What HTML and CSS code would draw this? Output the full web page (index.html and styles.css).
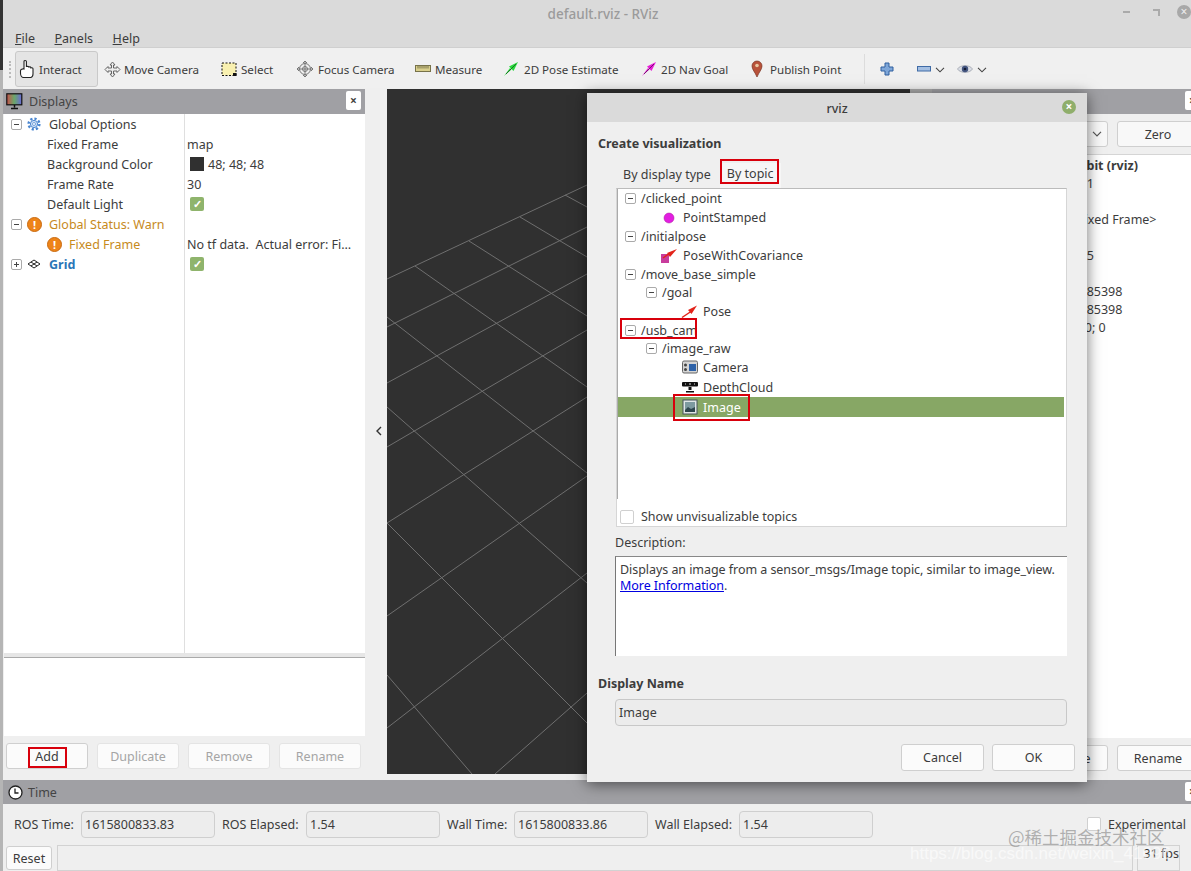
FILE: index.html
```html
<!DOCTYPE html>
<html lang="en">
<head>
    <meta charset="UTF-8">
    <title>default.rviz - RViz</title>
    <link rel="stylesheet" href="styles.css">
</head>
<body>
<div class="desk-strip"></div>
<div class="window">
    <!-- title + menu -->
    <header class="titlebar">
        <div class="title-row">
            <span class="win-title">default.rviz - RViz</span>
            <div class="win-controls">
                <span class="win-min"></span>
                <span class="win-max"></span>
                <span class="win-close">×</span>
            </div>
        </div>
        <nav class="menu">
            <span><u>F</u>ile</span>
            <span><u>P</u>anels</span>
            <span><u>H</u>elp</span>
        </nav>
    </header>

    <!-- toolbar -->
    <div class="toolbar">
        <span class="grip"></span>
        <div class="tool tool-interact active">
            <svg width="18" height="20" viewBox="0 0 18 20"><path d="M5 10V2.6c0-1.5 2.4-1.5 2.4 0V8c0-1 2.2-1 2.2 0v.6c0-1 2.2-1 2.2 0v.8c0-1 2.2-.9 2.2.3v5.400c0 1.500-.8 3-2.200 3.400H4.500C2.800 18.500 1.500 16.400 1.500 14v-2.200C1.500 10.400 3.500 9.600 5 10z" fill="#fff" stroke="#222" stroke-width="1.100"/></svg>
            <span>Interact</span>
        </div>
        <div class="tool tool-move">
            <svg width="17" height="17" viewBox="0 0 17 17"><path d="M8.500 1l2.500 3H9.500v3H13V5.500l3 3-3 3V10H9.500v3H11l-2.500 3-2.500-3h1.500v-3H4v1.500l-3-3 3-3V7h3.500V4H6z" fill="#eee" stroke="#666" stroke-width="1"/></svg>
            <span>Move Camera</span>
        </div>
        <div class="tool tool-select">
            <svg width="16" height="15" viewBox="0 0 16 15"><rect x="1" y="1" width="14" height="12.500" fill="#f8f0b0" stroke="#111" stroke-dasharray="2 1.500"/><rect x="12" y="11" width="3.500" height="3" fill="#111"/></svg>
            <span>Select</span>
        </div>
        <div class="tool tool-focus">
            <svg width="18" height="18" viewBox="0 0 18 18" fill="none" stroke="#777"><circle cx="9" cy="9" r="5.500" fill="#eee"/><circle cx="9" cy="9" r="2.500"/><path d="M9 1v16M1 9h16"/><path d="M7 3l2-2 2 2M7 15l2 2 2-2M3 7L1 9l2 2M15 7l2 2-2 2"/></svg>
            <span>Focus Camera</span>
        </div>
        <div class="tool tool-measure">
            <svg width="16" height="10" viewBox="0 0 16 10"><rect x=".5" y="1.500" width="15" height="6" fill="#d9cf8c" stroke="#77724a"/><path d="M3 2v2.500M5 2v2.500M7 2v2.500M9 2v2.500M11 2v2.500M13 2v2.500" stroke="#77724a"/></svg>
            <span>Measure</span>
        </div>
        <div class="tool tool-pose">
            <svg width="16" height="16" viewBox="0 0 16 16"><path d="M1 15l6-8 1.500 1.500z" fill="#28d83c"/><path d="M15 1L6 5.500 10.500 10z" fill="#28d83c"/><path d="M3 13L13 3" stroke="#145c1c" stroke-width=".8"/></svg>
            <span>2D Pose Estimate</span>
        </div>
        <div class="tool tool-nav">
            <svg width="16" height="16" viewBox="0 0 16 16"><path d="M1 15l6-8 1.500 1.500z" fill="#e81cd8"/><path d="M15 1L6 5.500 10.500 10z" fill="#e81cd8"/><path d="M3 13L13 3" stroke="#5c1458" stroke-width=".8"/></svg>
            <span>2D Nav Goal</span>
        </div>
        <div class="tool tool-publish">
            <svg width="12" height="18" viewBox="0 0 12 18"><path d="M6 17C4 12 1 9.500 1 6a5 5 0 0 1 10 0c0 3.500-3 6-5 11z" fill="#b8523a" stroke="#7a3324" stroke-width=".7"/><circle cx="6" cy="5.500" r="1.800" fill="#e8c8a0"/></svg>
            <span>Publish Point</span>
        </div>
        <span class="tool-sep"></span>
        <div class="tool-icons">
            <svg class="ic-plus" width="14" height="14" viewBox="0 0 14 14"><path d="M5 1h4v4h4v4H9v4H5V9H1V5h4z" fill="#7ea6d8" stroke="#2f5f9e"/></svg>
            <svg class="ic-minus" width="14" height="6" viewBox="0 0 14 6"><rect x=".5" y=".5" width="13" height="4.500" fill="#a4bfe2" stroke="#3f6ba6"/></svg>
            <svg class="ic-chev" width="10" height="6" viewBox="0 0 10 6" fill="none" stroke="#444" stroke-width="1.100"><path d="M1 .8l4 4 4-4"/></svg>
            <svg class="ic-eye" width="16" height="12" viewBox="0 0 16 12"><path d="M.5 6C3 1.500 13 1.500 15.500 6 13 10.500 3 10.500.5 6z" fill="#d8dce4" stroke="#8a8f9a" stroke-width=".6"/><circle cx="8" cy="6" r="3.200" fill="#44557f"/><circle cx="8" cy="6" r="1.300" fill="#111a33"/></svg>
            <svg class="ic-chev" width="10" height="6" viewBox="0 0 10 6" fill="none" stroke="#444" stroke-width="1.100"><path d="M1 .8l4 4 4-4"/></svg>
        </div>
    </div>

    <!-- main dock area -->
    <div class="main">
        <section class="panel-left">
            <div class="dock-header">
                <svg width="17" height="17" viewBox="0 0 17 17"><defs><linearGradient id="mon" x1="0" x2="1"><stop offset="0" stop-color="#c8504a"/><stop offset=".5" stop-color="#6aa86a"/><stop offset="1" stop-color="#6a6ad8"/></linearGradient></defs><rect x=".8" y=".8" width="15" height="11" fill="url(#mon)" stroke="#111" stroke-width="1.200"/><path d="M8.500 12v2.500M5 15.500h7" stroke="#111" stroke-width="1.500"/></svg>
                <span>Displays</span>
                <span class="dock-close">×</span>
            </div>
            <div class="tree">
                <div class="tree-row">
                    <div class="tree-name"><span class="exp minus"></span>
                        <svg class="row-icon" width="14" height="14" viewBox="0 0 14 14" fill="none"><circle cx="7" cy="7" r="5.400" stroke="#4a86d0" stroke-width="2.400" stroke-dasharray="2.200 2"/><circle cx="7" cy="7" r="3.600" fill="#cfe0f6" stroke="#4a86d0"/><circle cx="7" cy="7" r="1.500" fill="#fff" stroke="#4a86d0" stroke-width=".7"/></svg>
                        <span>Global Options</span></div>
                    <div class="tree-val"></div>
                </div>
                <div class="tree-row">
                    <div class="tree-name prop">Fixed Frame</div>
                    <div class="tree-val">map</div>
                </div>
                <div class="tree-row">
                    <div class="tree-name prop">Background Color</div>
                    <div class="tree-val"><span class="swatch"></span>48; 48; 48</div>
                </div>
                <div class="tree-row">
                    <div class="tree-name prop">Frame Rate</div>
                    <div class="tree-val">30</div>
                </div>
                <div class="tree-row">
                    <div class="tree-name prop">Default Light</div>
                    <div class="tree-val"><span class="check">✓</span></div>
                </div>
                <div class="tree-row warn">
                    <div class="tree-name"><span class="exp minus"></span><span class="warn-ic">!</span><span>Global Status: Warn</span></div>
                    <div class="tree-val"></div>
                </div>
                <div class="tree-row warn">
                    <div class="tree-name sub"><span class="warn-ic">!</span><span>Fixed Frame</span></div>
                    <div class="tree-val dark">No tf data.&nbsp; Actual error: Fi…</div>
                </div>
                <div class="tree-row">
                    <div class="tree-name grid-name"><span class="exp plus"></span>
                        <svg class="row-icon" width="14" height="10" viewBox="0 0 14 10" fill="none" stroke="#222"><path d="M7 1l6 4-6 4-6-4z"/><path d="M4 3l6 4M10 3L4 7"/></svg>
                        <span>Grid</span></div>
                    <div class="tree-val"><span class="check">✓</span></div>
                </div>
            </div>
            <div class="splitter"></div>
            <div class="help-box"></div>
            <div class="btn-row">
                <button class="btn">Add</button>
                <button class="btn off">Duplicate</button>
                <button class="btn off">Remove</button>
                <button class="btn off">Rename</button>
            </div>
        </section>

        <div class="collapse-strip">
            <svg width="8" height="10" viewBox="0 0 8 10" fill="none" stroke="#333" stroke-width="1.400"><path d="M6 1L2 5l4 4"/></svg>
        </div>

        <div class="viewport">
            <svg width="523" height="685" viewBox="387 89 523 685" stroke="#6f6f6f" stroke-width="1" fill="none">
                <path d="M387 279L587 185M387 327L587 227M387 383L587 274M387 447L587 330M387 523L587 397M387 616L587 476M387 728L587 573M495 774L587 693"/>
                <path d="M565 195L587 207M520 217L587 257M469 241L587 316M415 266L587 387M387 317L587 473M387 407L587 583M387 523L587 723M387 675L472 774"/>
            </svg>
        </div>

        <div class="gap-strip"></div>

        <section class="panel-right">
            <div class="dock-header">
                <span>Views</span>
                <span class="dock-close clipped">×</span>
            </div>
            <div class="views-top">
                <span class="combo"><svg width="10" height="6" viewBox="0 0 10 6" fill="none" stroke="#555" stroke-width="1.200"><path d="M1 .8l4 4 4-4"/></svg></span>
                <button class="btn zero">Zero</button>
            </div>
            <div class="views-list">
                <div class="view-row bold"><span>Current View</span><span>Orbit (rviz)</span></div>
                <div class="view-row num"><span>Near Clip</span><span>0.01</span></div>
                <div class="view-row"><span>Invert Z</span><span></span></div>
                <div class="view-row"><span>Target</span><span>&lt;Fixed Frame&gt;</span></div>
                <div class="view-row num"><span>Distance</span><span>10</span></div>
                <div class="view-row num"><span>Shape</span><span>0.05</span></div>
                <div class="view-row"><span>Fixed</span><span></span></div>
                <div class="view-row num"><span>Yaw</span><span>0.785398</span></div>
                <div class="view-row num"><span>Pitch</span><span>0.785398</span></div>
                <div class="view-row"><span>Focal</span><span>0; 0; 0</span></div>
            </div>
            <div class="btn-row right-btns">
                <button class="btn">Remove</button>
                <button class="btn">Rename</button>
            </div>
        </section>
    </div>

    <!-- time panel -->
    <section class="time-panel">
        <div class="dock-header time-head">
            <svg width="15" height="15" viewBox="0 0 15 15"><circle cx="7.500" cy="7.500" r="6.500" fill="#fff" stroke="#222" stroke-width="1.300"/><path d="M7 3.500V8h3.500" fill="none" stroke="#222" stroke-width="1.300"/></svg>
            <span>Time</span>
            <span class="dock-close clipped">×</span>
        </div>
        <div class="time-row">
            <label class="lbl-short">ROS Time:</label><span class="field">1615800833.83</span>
            <label class="lbl-long">ROS Elapsed:</label><span class="field">1.54</span>
            <label class="lbl-short">Wall Time:</label><span class="field">1615800833.86</span>
            <label class="lbl-long">Wall Elapsed:</label><span class="field">1.54</span>
            <span class="experimental"><span class="box"></span>Experimental</span>
        </div>
    </section>

    <footer class="statusbar">
        <button class="btn reset">Reset</button>
        <span class="status-field"></span>
        <span class="fps">31 fps</span>
    </footer>
</div>

<!-- Create visualization dialog -->
<div class="dialog">
    <div class="dlg-title">
        <span>rviz</span>
        <span class="dlg-close">×</span>
    </div>
    <div class="dlg-body">
        <h4 class="dlg-heading">Create visualization</h4>
        <div class="tabs">
            <span class="tab">By display type</span>
            <span class="tab current">By topic</span>
        </div>
        <div class="topic-box">
            <div class="topic-tree">
                <div class="t-row"><span class="exp minus"></span>/clicked_point</div>
                <div class="t-row leaf"><svg class="t-icon" width="16" height="16" viewBox="0 0 16 16"><circle cx="5" cy="8" r="5" fill="#e21ee0" stroke="#a8149c" stroke-width=".5"/></svg>PointStamped</div>
                <div class="t-row"><span class="exp minus"></span>/initialpose</div>
                <div class="t-row leaf"><svg class="t-icon" width="16" height="16" viewBox="0 0 16 16"><rect x="-3" y="6" width="8" height="9" fill="#c83c9c"/><path d="M-1 10L6 5" stroke="#e2231a" stroke-width="1.500"/><path d="M13 1L3 5 6 9z" fill="#e2231a"/></svg>PoseWithCovariance</div>
                <div class="t-row short"><span class="exp minus"></span>/move_base_simple</div>
                <div class="t-row lvl2 short"><span class="exp minus"></span>/goal</div>
                <div class="t-row leaf2 tall"><svg class="t-icon" width="16" height="16" viewBox="0 0 16 16"><path d="M0 14.500L9 8.500" stroke="#e2231a" stroke-width="1.500"/><path d="M15 2.500L6 7 9.500 11z" fill="#e2231a"/></svg>Pose</div>
                <div class="t-row"><span class="exp minus"></span>/usb_cam</div>
                <div class="t-row lvl2 xshort"><span class="exp minus"></span>/image_raw</div>
                <div class="t-row leaf2 tall"><svg class="t-icon" width="16" height="16" viewBox="0 0 16 16"><rect x=".5" y="2" width="15" height="12" rx="1.500" fill="#d4d4d4" stroke="#666"/><rect x="7" y="5" width="7" height="7" fill="#2e62a8"/><circle cx="3.500" cy="6" r="1.500" fill="#444"/><circle cx="3.500" cy="10.500" r="1.500" fill="#444"/></svg>Camera</div>
                <div class="t-row leaf2 tall"><svg class="t-icon" width="16" height="16" viewBox="0 0 16 16"><rect x="0" y="3" width="16" height="4.500" rx="1" fill="#111"/><path d="M3 5h1M7 5h2M12 5h1" stroke="#ddd"/><path d="M6.500 8h3v3h-3zM4 12h8v1.500H4z" fill="#111"/></svg>DepthCloud</div>
                <div class="t-row leaf2 tall selected"><svg class="t-icon" width="16" height="16" viewBox="0 0 16 16"><rect x="1" y="1" width="14" height="14" fill="#dfe6e6" stroke="#46555a"/><rect x="3" y="3" width="10" height="10" fill="#7d9aa0"/><path d="M3 11l3-3 3 2 4-2v5H3z" fill="#2f474f"/></svg>Image</div>
            </div>
            <label class="show-row"><span class="box"></span>Show unvisualizable topics</label>
        </div>
        <div class="desc-label">Description:</div>
        <div class="desc-box">
            Displays an image from a sensor_msgs/Image topic, similar to image_view.<br>
            <a class="more">More Information</a>.
        </div>
        <h4 class="dlg-heading name-heading">Display Name</h4>
        <div class="name-input">Image</div>
        <div class="dlg-buttons">
            <button class="btn dlg-btn">Cancel</button>
            <button class="btn dlg-btn">OK</button>
        </div>
    </div>
</div>

<!-- red annotation boxes drawn over the screenshot -->
<span class="mark mark-topic"></span>
<span class="mark mark-cam"></span>
<span class="mark mark-image"></span>
<span class="mark mark-add"></span>

<div class="wm wm-cn">@稀土掘金技术社区</div>
<div class="wm wm-url">https://blog.csdn.net/weixin_41096</div>
</body>
</html>
```

FILE: styles.css
```css
* {
    box-sizing: border-box;
}

html, body {
    margin: 0;
    height: 871px;
    overflow: hidden;
}

body {
    position: relative;
    background: #b5b5b5;
    font-family: "Noto Sans", sans-serif;
    font-size: 12.5px;
    color: #3c3c3c;
}

button {
    font: inherit;
}

.desk-strip {
    position: absolute;
    left: 0;
    top: 0;
    width: 3px;
    height: 70px;
    background: #333;
}

.window {
    margin-left: 3px;
    height: 871px;
    display: flex;
    flex-direction: column;
    background: #efefef;
}

/* title bar */
.titlebar {
    height: 48px;
    flex: none;
    background: #dadada;
    border-bottom: 1px solid #cfcfcf;
}

.title-row {
    height: 27px;
    position: relative;
    display: flex;
    justify-content: center;
    align-items: center;
}

.win-title {
    color: #9b9b9b;
    font-weight: 500;
    font-size: 13.5px;
    transform: translateX(6px);
}

.win-controls {
    position: absolute;
    right: 0;
    top: 5px;
    display: flex;
    align-items: center;
}

.win-min {
    width: 7px;
    height: 2px;
    background: #aaa;
    margin-right: 23px;
}

.win-max {
    width: 7px;
    height: 7px;
    border-top: 2px solid #aaa;
    border-right: 2px solid #aaa;
    margin-right: 17px;
}

.win-close {
    width: 14px;
    height: 14px;
    border-radius: 50%;
    background: #a8a8a8;
    color: #eee;
    font-size: 12px;
    line-height: 14px;
    text-align: center;
}

.menu {
    display: flex;
    gap: 19.500px;
    padding: 2px 0 0 12px;
    height: 20px;
    align-items: center;
    font-size: 12.5px;
}

/* toolbar */
.toolbar {
    height: 40px;
    flex: none;
    display: flex;
    align-items: center;
    padding-top: 2px;
    background: #f0f0f0;
    position: relative;
}

.grip {
    width: 2px;
    height: 17px;
    margin-left: 6px;
    margin-right: 4px;
    border-left: 2px dotted #bbb;
}

.tool {
    height: 36px;
    display: flex;
    align-items: center;
    gap: 3px;
    flex: none;
    white-space: nowrap;
    font-size: 11.600px;
}

.tool.active {
    background: #e4e4e4;
    border: 1px solid #c9c9c9;
    border-radius: 3px;
}

.tool-interact { width: 83px; padding-left: 3px; margin-right: 6px; gap: 2px; }
.tool-move { width: 111px; }
.tool-select { width: 77px; padding-left: 4px; margin-left: 2px; gap: 4px; }
.tool-focus { width: 119px; padding-left: 2px; gap: 4px; }
.tool-measure { width: 86px; padding-left: 2px; gap: 4px; }
.tool-pose { width: 138px; padding-left: 4px; gap: 5px; }
.tool-nav { width: 110px; padding-left: 4px; gap: 4px; }
.tool-publish { width: 117px; padding-left: 4px; gap: 7px; }

.tool-sep {
    width: 1px;
    height: 30px;
    background: #dcdcdc;
}

.tool-icons {
    display: flex;
    align-items: center;
    padding-left: 15px;
}

.ic-plus { margin-right: 23px; }
.ic-minus { margin-right: 4px; }
.ic-chev { margin-top: 2px; }
.ic-eye { margin: 0 4px 0 12px; }

/* dock */
.main {
    height: 692px;
    flex: none;
    display: flex;
    padding-top: 1px;
    overflow: hidden;
}

.panel-left {
    width: 362px;
    flex: none;
    display: flex;
    flex-direction: column;
}

.dock-header {
    height: 25px;
    flex: none;
    background: #a0a0a4;
    display: flex;
    align-items: center;
    gap: 6px;
    padding-left: 3px;
    position: relative;
    font-size: 12.5px;
    color: #444;
}

.dock-close {
    position: absolute;
    right: 4px;
    top: 2px;
    width: 15px;
    height: 19px;
    background: #fff;
    border-radius: 2px;
    text-align: center;
    line-height: 19px;
    font-size: 12px;
    font-weight: 700;
}

.dock-close.clipped {
    right: -9px;
}

.tree {
    flex: 1;
    background: #fff;
    background-image: linear-gradient(#dfdfdf, #dfdfdf);
    background-size: 1px 100%;
    background-position: 180px 0;
    background-repeat: no-repeat;
    margin-left: 1px;
}

.tree-row {
    height: 20px;
    display: flex;
    align-items: center;
}

.tree-name {
    width: 180px;
    flex: none;
    display: flex;
    align-items: center;
    padding-left: 7px;
    white-space: nowrap;
}

.tree-name.prop {
    padding-left: 43px;
}

.tree-name.sub {
    padding-left: 43px;
}

.tree-val {
    padding-left: 3px;
    display: flex;
    align-items: center;
    white-space: nowrap;
}

.tree-row.warn .tree-name {
    color: #c78a1c;
}

.tree-val.dark {
    color: #3c3c3c;
}

.grid-name {
    color: #2a76b8;
    font-weight: 700;
}

.exp {
    width: 11px;
    height: 11px;
    flex: none;
    border: 1px solid #aaa;
    border-radius: 2px;
    background: #fff;
    position: relative;
    display: inline-block;
}

.exp::before {
    content: "";
    position: absolute;
    left: 2px;
    top: 4px;
    width: 5px;
    height: 1px;
    background: #444;
}

.exp.plus::after {
    content: "";
    position: absolute;
    left: 4px;
    top: 2px;
    width: 1px;
    height: 5px;
    background: #444;
}

.row-icon {
    margin: 0 8px 0 5px;
    flex: none;
}

.warn-ic {
    width: 15px;
    height: 15px;
    flex: none;
    border-radius: 50%;
    background: #ee8418;
    border: 1px solid #c96a10;
    color: #fff;
    font-weight: 700;
    font-size: 11px;
    line-height: 13px;
    text-align: center;
    margin: 0 7px 0 5px;
}

.sub .warn-ic {
    margin: 0 7px 0 0;
}

.swatch {
    width: 14px;
    height: 14px;
    background: #303030;
    margin: 0 4px 0 3px;
}

.check {
    width: 14px;
    height: 14px;
    margin-left: 3px;
    background: #8fb46c;
    border-radius: 2px;
    color: #fff;
    font-size: 11px;
    font-weight: 700;
    line-height: 14px;
    text-align: center;
}

.splitter {
    height: 5px;
    flex: none;
    background: #e6e6e6;
    border-bottom: 1px solid #aaa;
    margin-left: 1px;
}

.help-box {
    height: 78px;
    flex: none;
    background: #fff;
    margin-left: 1px;
}

.btn-row {
    display: flex;
    gap: 9px;
    padding: 7px 0 0 3px;
    height: 44px;
    flex: none;
}

.btn {
    width: 82px;
    height: 26px;
    padding: 0;
    background: #fbfbfb;
    border: 1px solid #cfcfcf;
    border-radius: 3px;
    color: #3c3c3c;
}

.btn.off {
    color: #a5a5a5;
    border-color: #e4e4e4;
}

.collapse-strip {
    width: 22px;
    flex: none;
    display: flex;
    align-items: center;
    padding-left: 10px;
    padding-bottom: 2px;
    height: 685px;
}

.viewport {
    width: 523px;
    height: 685px;
    flex: none;
    background: #303030;
}

.viewport svg {
    display: block;
}

.gap-strip {
    width: 22px;
    flex: none;
    background: linear-gradient(#ababab 4px, #efefef 4px);
    height: 25px;
}

.panel-right {
    flex: 1;
    display: flex;
    flex-direction: column;
    min-width: 0;
}

.views-top {
    height: 41px;
    flex: none;
    display: flex;
    justify-content: flex-end;
    align-items: center;
    gap: 9px;
    margin-right: -8px;
    border-bottom: 1px solid #d5d5d5;
}

.combo {
    width: 60px;
    height: 26px;
    background: #f8f8f8;
    border: 1px solid #cfcfcf;
    border-radius: 3px;
    display: flex;
    align-items: center;
    justify-content: flex-end;
    padding-right: 5px;
}

.zero {
    width: 82px;
    height: 26px;
    background: #f8f8f8;
}

.views-list {
    height: 583px;
    flex: none;
    background: #fff;
    padding-top: 1px;
}

.view-row {
    height: 18px;
    display: flex;
    align-items: center;
    white-space: nowrap;
}

.view-row.bold {
    font-weight: 700;
}

.view-row.num span:last-child {
    margin-left: -2px;
}

.view-row span:first-child {
    width: 139px;
    padding-left: 10px;
    flex: none;
}

.right-btns {
    padding: 7px 0 0 0;
    justify-content: flex-end;
    margin-right: -8px;
}

/* time panel */
.time-panel {
    flex: none;
}

.time-head {
    height: 24px;
    padding-left: 5px;
    gap: 5px;
}

.time-row {
    height: 40px;
    display: flex;
    align-items: center;
    padding-left: 11px;
    white-space: nowrap;
}

.lbl-short {
    width: 67px;
    flex: none;
}

.lbl-long {
    width: 84px;
    flex: none;
}

.field {
    width: 134px;
    height: 27px;
    margin-right: 7px;
    border: 1px solid #cfcfcf;
    border-radius: 4px;
    padding-left: 3px;
    line-height: 25px;
    background: #ededed;
}

.experimental {
    display: flex;
    align-items: center;
    margin-left: 207px;
    gap: 7px;
}

.box {
    display: inline-block;
    flex: none;
    width: 14px;
    height: 14px;
    background: #fff;
    border: 1px solid #d0d0d0;
    border-radius: 2px;
}

.statusbar {
    height: 27px;
    flex: none;
    display: flex;
    align-items: flex-start;
    padding: 1px 0 0 3px;
    gap: 5px;
}

.reset {
    width: 46px;
    height: 24px;
    margin-top: 1px;
}

.status-field {
    width: 1076px;
    height: 26px;
    border: 1px solid #d2d2d2;
}

.fps {
    margin-left: -1px;
    width: 43px;
    height: 26px;
    border: 1px solid #d2d2d2;
    text-align: right;
    padding-right: 0;
    line-height: 15px;
}

/* dialog */
.dialog {
    position: absolute;
    left: 587px;
    top: 93px;
    width: 500px;
    height: 689px;
    background: #efefef;
    box-shadow: 0 2px 14px rgba(0, 0, 0, .55);
    display: flex;
    flex-direction: column;
}

.dlg-title {
    height: 29px;
    flex: none;
    background: #dadada;
    display: flex;
    align-items: center;
    justify-content: center;
    position: relative;
    font-weight: 500;
    padding-top: 1px;
}

.dlg-close {
    position: absolute;
    right: 11px;
    top: 7px;
    width: 14px;
    height: 14px;
    border-radius: 50%;
    background: #8fae6b;
    color: #fff;
    text-align: center;
    line-height: 14px;
    font-size: 12px;
    font-weight: 700;
}

.dlg-body {
    flex: 1;
    padding: 0 12px 0 11px;
    position: relative;
}

.dlg-heading {
    margin: 0;
    font-size: 12.5px;
    font-weight: 700;
    height: 18px;
    line-height: 18px;
}

.dlg-heading:first-child {
    margin-top: 13px;
}

.tabs {
    display: flex;
    margin: 8px 0 0 18px;
    height: 27px;
    align-items: flex-end;
}

.tab {
    padding: 0 7px 1px;
    height: 25px;
    line-height: 24px;
}

.tab.current {
    background: #f6f6f6;
    margin-left: 2px;
    padding: 0 7px;
    line-height: 22px;
    height: 25px;
}

.topic-box {
    margin-left: 18px;
    margin-right: -1px;
    width: 451px;
    height: 339px;
    background: #fff;
    border: 1px solid #d6d6d6;
    border-top: 1px solid #bbb;
    position: relative;
}

.topic-tree {
    height: 310px;
    border-left: 1px solid #aaa;
}

.t-row {
    height: 19px;
    display: flex;
    align-items: center;
    padding-left: 7px;
    white-space: nowrap;
}

.t-row .exp {
    margin-right: 5px;
}

.t-row.short {
    height: 18px;
}

.t-row.xshort {
    height: 17px;
}

.t-row.tall {
    height: 20px;
}

.t-row.lvl2 {
    padding-left: 28px;
}

.t-row.leaf {
    padding-left: 46px;
}

.t-row.leaf2 {
    padding-left: 64px;
}

.t-icon {
    margin-right: 3px;
    flex: none;
    overflow: visible;
}

.leaf2 .t-icon {
    margin-right: 5px;
}

.t-row.selected {
    background: #87a765;
    color: #fff;
    margin-right: 2px;
}

.show-row {
    display: flex;
    align-items: center;
    gap: 7px;
    padding-left: 3px;
    margin-top: 9px;
}

.desc-label {
    height: 29px;
    margin-left: 17px;
    line-height: 31px;
}

.desc-box {
    margin-left: 17px;
    width: 452px;
    height: 100px;
    background: #fff;
    border-left: 1px solid #777;
    border-top: 1px solid #888;
    padding: 5px 0 0 4px;
    line-height: 16px;
    letter-spacing: -.055px;
}

.more {
    color: #0000e0;
    text-decoration: underline;
}

.name-heading {
    margin-top: 19px;
}

.name-input {
    margin: 6px 0 0 17px;
    width: 452px;
    height: 27px;
    border: 1px solid #c8c8c8;
    border-radius: 4px;
    background: #ececec;
    padding-left: 3px;
    line-height: 25px;
}

.dlg-buttons {
    display: flex;
    justify-content: flex-end;
    gap: 8px;
    margin: 18px 0 0 0;
}

.dlg-btn {
    width: 83px;
    height: 27px;
}

/* annotations */
.mark {
    position: absolute;
    border: 2px solid #d8000c;
    pointer-events: none;
}

.mark-topic { left: 720px; top: 159px; width: 59px; height: 25px; }
.mark-cam { left: 620px; top: 318px; width: 77px; height: 21px; }
.mark-image { left: 673px; top: 394px; width: 77px; height: 27px; }
.mark-add { left: 28px; top: 747px; width: 39px; height: 21px; }

.wm {
    position: absolute;
    white-space: nowrap;
    pointer-events: none;
}

.wm-cn {
    left: 1008px;
    top: 826px;
    font-family: "Noto Sans CJK SC", sans-serif;
    font-size: 17.500px;
    line-height: 22px;
    color: rgba(120, 120, 120, .55);
}

.wm-url {
    left: 910px;
    top: 844px;
    font-family: "Liberation Sans", sans-serif;
    font-size: 17px;
    line-height: 20px;
    color: rgba(255, 255, 255, .6);
}
```
